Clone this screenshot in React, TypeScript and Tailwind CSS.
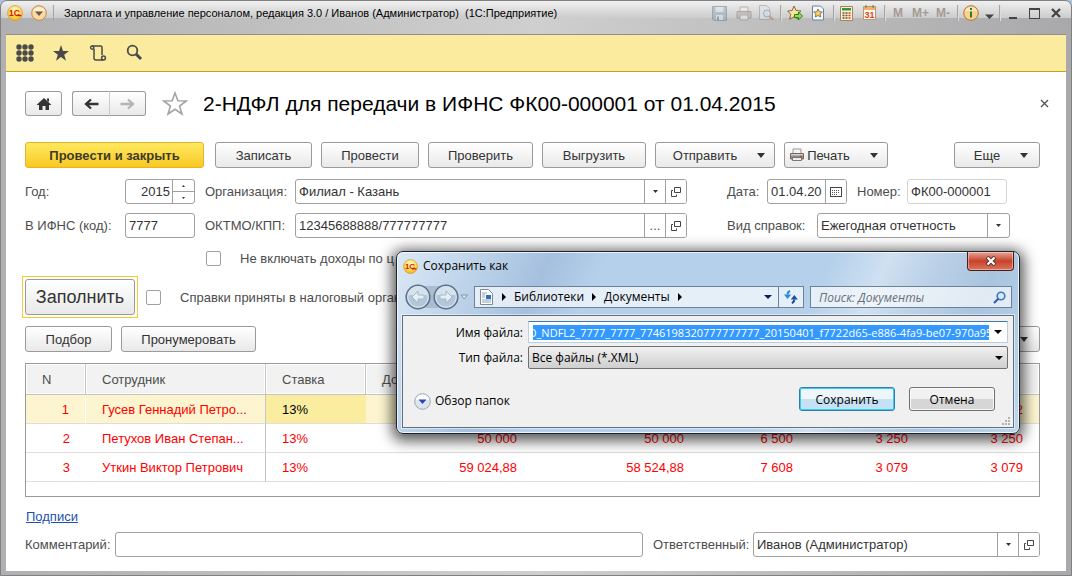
import React from "react";

const BTN =
  "flex items-center justify-center rounded-[3px] border border-[#9a9a9a] bg-linear-to-b from-white to-[#e9e9e9] text-[#333] whitespace-nowrap";
const FIELD = "flex h-[25px] items-stretch overflow-hidden rounded-[3px] border border-[#a0a0a0] bg-white";
const CELL = "flex w-[21px] shrink-0 items-center justify-center border-l border-[#a0a0a0] bg-white";
const INPUT = "min-w-0 flex-1 bg-transparent px-[3px] text-[#333] outline-none";

function Logo({ size }: { size: number }) {
  return (
    <svg width={size} height={size} viewBox="0 0 16 16" aria-hidden="true">
      <defs>
        <radialGradient id="logoFill" cx="50%" cy="30%" r="75%">
          <stop offset="0" stopColor="#fffbd0" />
          <stop offset="0.6" stopColor="#fbd94c" />
          <stop offset="1" stopColor="#f3a81c" />
        </radialGradient>
      </defs>
      <circle cx="8" cy="8" r="7.4" fill="url(#logoFill)" stroke="#d99a2c" strokeWidth="0.8" />
      <text x="2" y="11" fontFamily="Liberation Sans, sans-serif" fontSize="8.5" fontWeight="700" fill="#d9160c">
        1С
      </text>
      <path d="M9.5 10.5h4.8" stroke="#d9160c" strokeWidth="1.4" />
    </svg>
  );
}

function Caret({ small }: { small?: boolean }) {
  return small ? (
    <svg width="5" height="3" viewBox="0 0 5 3" aria-hidden="true">
      <path d="M0 0h5L2.5 3z" fill="#333" />
    </svg>
  ) : (
    <svg width="8" height="5" viewBox="0 0 8 5" aria-hidden="true">
      <path d="M0 0h8L4 5z" fill="#333" />
    </svg>
  );
}

function OpenIcon() {
  return (
    <svg width="10" height="10" viewBox="0 0 10 10" fill="none" stroke="#444" aria-hidden="true">
      <path d="M3.500 .5h6v5h-6z" />
      <path d="M2 3.500H.5v6h5V7.500" />
    </svg>
  );
}

function Sep() {
  return <span className="h-4 w-px bg-[#a3a3a3] shadow-[1px_0_0_#dedede]" />;
}

function TitleBar() {
  return (
    <header className="flex h-[33px] items-start pt-[3px] pr-[4px]">
      <div className="flex h-[18px] items-center pl-[1px]">
        <Logo size={16} />
        <button aria-label="Главное меню" className="ml-2">
          <svg width="16" height="16" viewBox="0 0 16 16" aria-hidden="true">
            <circle cx="8" cy="8" r="7.300" fill="#fbd9a0" stroke="#c08a4c" />
            <path d="M2 6a6.200 5 0 0 1 12 0z" fill="#fff" opacity=".6" />
            <path d="M4 6.500h8L8 11z" fill="#6e5a48" />
          </svg>
        </button>
        <span className="mr-[10px] ml-[6px] h-4 w-px bg-[#a3a3a3]" />
        <h1 className="text-[11px] leading-[18px] whitespace-pre text-black">
          {"Зарплата и управление персоналом, редакция 3.0 / Иванов (Администратор)  (1С:Предприятие)"}
        </h1>
      </div>
      <div className="ml-auto flex h-[18px] items-center">
        <button aria-label="Сохранить" className="opacity-50">
          <svg width="15" height="15" viewBox="0 0 15 15" aria-hidden="true">
            <path d="M.5.5h14v14H2L.5 13z" fill="#8fa5b8" stroke="#5d7a94" />
            <path d="M3.500 1h8v5h-8zM4 9h7v5H4z" fill="#dfe6ec" />
            <path d="M5 10.500h2V14H5z" fill="#5d7a94" />
          </svg>
        </button>
        <button aria-label="Печать" className="ml-[9px] opacity-50">
          <svg width="16" height="15" viewBox="0 0 16 15" aria-hidden="true">
            <path d="M4 1h8v5H4z" fill="#f2f2f2" stroke="#8a8a8a" />
            <path d="M1 5.500h14V12H1z" fill="#b5aaa2" stroke="#7d736c" />
            <path d="M4 9h8v5H4z" fill="#eee" stroke="#8a8a8a" />
            <path d="M11 7h2" stroke="#d06030" />
          </svg>
        </button>
        <button aria-label="Предварительный просмотр" className="ml-[6px] opacity-50">
          <svg width="16" height="16" viewBox="0 0 16 16" aria-hidden="true">
            <path d="M1.500.5h7l3 3v11h-10z" fill="#dfe3e6" stroke="#8494a2" />
            <circle cx="9" cy="8.500" r="3.500" fill="#cfe0ee" stroke="#6f8294" />
            <path d="M11.500 11l3.500 4" stroke="#b07a58" strokeWidth="2" />
          </svg>
        </button>
        <span className="w-[6px]" />
        <Sep />
        <button aria-label="Добавить в избранное" className="ml-[6px]">
          <svg width="16" height="16" viewBox="0 0 16 16" aria-hidden="true">
            <path d="M7 1l2 4.500 5 .5-3.700 3.300 1 5L7 11.800 2.700 14.300l1-5L.6 6l4.600-.5z" fill="#fbe3a0" stroke="#7d6b4a" />
            <path d="M7.500 9.500h4V7l4 4-4 4v-2.500h-4z" fill="#8be04c" stroke="#2f7d18" />
          </svg>
        </button>
        <button aria-label="Избранное" className="ml-[8px]">
          <svg width="14" height="16" viewBox="0 0 14 16" aria-hidden="true">
            <path d="M1.500 1h8l3 3v11h-11z" fill="#f4f9ff" stroke="#6484a4" />
            <path d="M7 4l1.300 2.700 3 .3-2.200 2 .6 3L7 10.500 4.300 12l.6-3-2.200-2 3-.3z" fill="#f9cf6a" stroke="#7b6030" strokeWidth=".8" />
          </svg>
        </button>
        <span className="w-[8px]" />
        <Sep />
        <button aria-label="Калькулятор" className="ml-[6px]">
          <svg width="13" height="15" viewBox="0 0 13 15" aria-hidden="true">
            <path d="M.5.5h12v14H.5z" fill="#fbf1d6" stroke="#a48355" />
            <path d="M2 2h9v2.500H2z" fill="#3d9142" />
            <path d="M2.500 7h2M5.500 7h2M2.500 9.500h2M5.500 9.500h2M2.500 12h2M5.500 12h2" stroke="#6b4c30" strokeWidth="1.300" />
            <path d="M8.500 7h2M8.500 9.500h2M8.500 12h2" stroke="#d53b1c" strokeWidth="1.300" />
          </svg>
        </button>
        <button aria-label="Календарь" className="ml-[10px]">
          <svg width="13" height="16" viewBox="0 0 13 16" aria-hidden="true">
            <path d="M.5 1.500h12v13H.5z" fill="#fffaf0" stroke="#b59b78" />
            <path d="M1 2h11v3H1z" fill="#efb370" />
            <path d="M3 0v3M10 0v3" stroke="#8c6a40" />
            <text x="1.500" y="13" fontFamily="Liberation Sans, sans-serif" fontSize="9" fontWeight="700" fill="#df3c1c">
              31
            </text>
          </svg>
        </button>
        <span className="w-[8px]" />
        <Sep />
        <button className="ml-[8px] text-[12px] leading-4 font-bold text-[#a49a94]">M</button>
        <button className="ml-[9px] text-[12px] leading-4 font-bold text-[#a49a94]">M+</button>
        <button className="ml-[7px] text-[12px] leading-4 font-bold text-[#a49a94]">M-</button>
        <span className="w-[7px]" />
        <Sep />
        <button aria-label="Справка" className="ml-[5px] flex items-center">
          <svg width="16" height="16" viewBox="0 0 16 16" aria-hidden="true">
            <circle cx="8" cy="8" r="7.300" fill="#fbd08a" stroke="#a87a40" />
            <path d="M2 6a6.200 5 0 0 1 12 0z" fill="#fff" opacity=".5" />
            <path d="M8 3v2M8 6.500v6" stroke="#2f7d28" strokeWidth="2" />
          </svg>
          <svg className="mt-[6px] ml-[6px]" width="9" height="5" viewBox="0 0 9 5" aria-hidden="true">
            <path d="M0 .5h9L4.500 5z" fill="#444" />
          </svg>
        </button>
        <span className="w-[5px]" />
        <Sep />
        <button aria-label="Свернуть" className="ml-[9px] flex h-4 w-[8px] items-end pb-[2px]">
          <span className="h-[2px] w-full bg-[#444]" />
        </button>
        <button aria-label="Развернуть" className="ml-[12px] h-[11px] w-[11px] border border-t-2 border-[#444]" />
        <button aria-label="Закрыть" className="mr-[1px] ml-[11px]">
          <svg width="10" height="10" viewBox="0 0 10 10" aria-hidden="true">
            <path d="M1 1l8 8M9 1L1 9" stroke="#444" strokeWidth="2.300" />
          </svg>
        </button>
      </div>
    </header>
  );
}

function YellowBar() {
  return (
    <nav className="flex h-[37px] items-center border-b border-[#bfa51a] bg-[#fbeb9e] pl-[10px]">
      <button aria-label="Разделы">
        <svg width="18" height="18" viewBox="0 0 18 18" fill="#4a4a4a" aria-hidden="true">
          {[3, 9, 15].map((y) => [3, 9, 15].map((x) => <circle key={`${x}-${y}`} cx={x} cy={y} r="2.700" />))}
        </svg>
      </button>
      <button aria-label="Избранное" className="ml-[18px]">
        <svg width="18" height="18" viewBox="0 0 18 18" fill="#4a4a4a" aria-hidden="true">
          <path d="M9 1l2 6h6l-4.800 3.700 1.800 6L9 13.100l-5 3.600 1.800-6L1 7h6z" />
        </svg>
      </button>
      <button aria-label="История" className="ml-[19px]">
        <svg width="18" height="18" viewBox="0 0 18 18" fill="none" stroke="#4a4a4a" strokeWidth="1.500" aria-hidden="true">
          <path d="M3 2h8.500q1.500 0 1.500 1.500V11M5 4.500V14q0 2 2 2H14" />
          <circle cx="3.200" cy="3.600" r="1.600" />
          <circle cx="14.500" cy="14" r="1.900" />
        </svg>
      </button>
      <button aria-label="Поиск" className="ml-[18px]">
        <svg width="18" height="18" viewBox="0 0 18 18" fill="none" stroke="#4a4a4a" aria-hidden="true">
          <circle cx="7.500" cy="6.500" r="4.800" strokeWidth="1.800" />
          <path d="M11 10l5 5" strokeWidth="3" />
        </svg>
      </button>
    </nav>
  );
}

function Heading() {
  return (
    <div className="flex h-[25px] items-center">
      <button aria-label="Домой" className={`${BTN} h-[25px] w-[37px]`}>
        <svg width="16" height="14" viewBox="0 0 16 14" aria-hidden="true">
          <path d="M8 1l7.500 7H13v5H9.500V9h-3v4H3V8H.5z" fill="#333" />
          <path d="M11 1.500h2V5l-2-1.500z" fill="#333" />
        </svg>
      </button>
      <div className="ml-[10px] flex">
        <button aria-label="Назад" className={`${BTN} h-[25px] w-[38px] rounded-r-none border-r-[#ccc]`}>
          <svg width="15" height="12" viewBox="0 0 15 12" aria-hidden="true">
            <path d="M14.500 6H3M7 1.500L2 6l5 4.500" fill="none" stroke="#333" strokeWidth="2.300" />
          </svg>
        </button>
        <button aria-label="Вперед" className={`${BTN} h-[25px] w-[36px] rounded-l-none border-l-0`}>
          <svg width="15" height="12" viewBox="0 0 15 12" aria-hidden="true">
            <path d="M.5 6H12M8 1.500L13 6l-5 4.500" fill="none" stroke="#b4b4b4" strokeWidth="2.300" />
          </svg>
        </button>
      </div>
      <button aria-label="В избранное" className="ml-[16px]">
        <svg width="26" height="25" viewBox="0 0 26 25" aria-hidden="true">
          <path
            d="M13 2l2.900 7.800 8.300.2-6.600 5 2.400 8-7-4.700L6 23l2.400-8-6.600-5 8.300-.2z"
            fill="#fff"
            stroke="#a4a4a4"
            strokeWidth="1.600"
          />
        </svg>
      </button>
      <h2 className="ml-[15px] text-[21px] leading-[25px] whitespace-nowrap text-black">
        2-НДФЛ для передачи в ИФНС ФК00-000001 от 01.04.2015
      </h2>
      <button aria-label="Закрыть документ" className="-mr-[9px] ml-auto">
        <svg width="9" height="9" viewBox="0 0 9 9" aria-hidden="true">
          <path d="M1 1l7 7M8 1L1 8" stroke="#555" strokeWidth="1.400" />
        </svg>
      </button>
    </div>
  );
}

function Commands() {
  return (
    <div className="mt-[26px] flex h-[26px]">
      <button className="w-[179px] rounded-[3px] border border-[#e8b32c] bg-linear-to-b from-[#fee95e] to-[#f8c91c] font-bold text-[#3f3a28]">
        Провести и закрыть
      </button>
      <button className={`${BTN} ml-[11px] w-[97px]`}>Записать</button>
      <button className={`${BTN} ml-[9px] w-[98px]`}>Провести</button>
      <button className={`${BTN} ml-[9px] w-[105px]`}>Проверить</button>
      <button className={`${BTN} ml-[9px] w-[104px]`}>Выгрузить</button>
      <button className={`${BTN} ml-[9px] w-[120px] gap-[20px] pl-[8px]`}>
        Отправить <Caret />
      </button>
      <button className={`${BTN} ml-[9px] w-[104px] pr-[4px]`}>
        <svg width="14" height="14" viewBox="0 0 14 14" aria-hidden="true">
          <path d="M3 1h8v5H3z" fill="#f4f4f4" stroke="#999" />
          <path d="M.5 5.500h13v5.500H.5z" fill="#8f8a86" stroke="#6e6965" />
          <path d="M1 6h12v1.500H1z" fill="#d4d0cc" />
          <path d="M2.500 9.500h9v3h-9z" fill="#f0ede9" stroke="#777" />
          <path d="M10 8.500h2" stroke="#e03a1c" strokeWidth="1.400" />
        </svg>
        <span className="ml-[3px]">Печать</span>
        <span className="ml-[20px]">
          <Caret />
        </span>
      </button>
      <button className={`${BTN} ml-auto w-[86px] gap-[20px] pl-[8px]`}>
        Еще <Caret />
      </button>
    </div>
  );
}

function MainFields() {
  return (
    <div className="mt-[11px] flex pr-[30px]">
      <div className="grid flex-1 grid-cols-[100px_70px_80px_minmax(0,1fr)] items-center gap-x-0 gap-y-[9px]">
        <label htmlFor="year">Год:</label>
        <div className={FIELD}>
          <input id="year" defaultValue="2015" className={`${INPUT} pr-[2px] text-right`} />
          <div className="flex w-[22px] flex-col border-l border-[#a0a0a0]">
            <button aria-label="Больше" className="flex flex-1 items-center justify-center border-b border-[#a0a0a0]">
              <svg width="3" height="2" viewBox="0 0 3 2" aria-hidden="true">
                <path d="M0 2h3L1.500 0z" fill="#333" />
              </svg>
            </button>
            <button aria-label="Меньше" className="flex flex-1 items-center justify-center">
              <svg width="3" height="2" viewBox="0 0 3 2" aria-hidden="true">
                <path d="M0 0h3L1.500 2z" fill="#333" />
              </svg>
            </button>
          </div>
        </div>
        <label htmlFor="org" className="pl-[10px] whitespace-nowrap">
          Организация:
        </label>
        <div className={`${FIELD} ml-5`}>
          <input id="org" defaultValue="Филиал - Казань" className={INPUT} />
          <button aria-label="Выбрать организацию" className={CELL}>
            <Caret small />
          </button>
          <button aria-label="Открыть организацию" className={CELL}>
            <OpenIcon />
          </button>
        </div>
        <label htmlFor="ifns" className="whitespace-nowrap">
          В ИФНС (код):
        </label>
        <div className={FIELD}>
          <input id="ifns" defaultValue="7777" className={INPUT} />
        </div>
        <label htmlFor="oktmo" className="pl-[10px] whitespace-nowrap">
          ОКТМО/КПП:
        </label>
        <div className={`${FIELD} ml-5`}>
          <input id="oktmo" defaultValue="12345688888/777777777" className={INPUT} />
          <button aria-label="Подобрать код" className={CELL}>
            ...
          </button>
          <button aria-label="Открыть код" className={CELL}>
            <OpenIcon />
          </button>
        </div>
      </div>
      <div className="ml-[40px] flex w-[283px] flex-col gap-[9px]">
        <div className="flex items-center">
          <label htmlFor="date" className="w-[40px]">
            Дата:
          </label>
          <div className={`${FIELD} w-[80px]`}>
            <input id="date" defaultValue="01.04.20" className={INPUT} />
            <button aria-label="Календарь" className={CELL}>
              <svg width="12" height="10" viewBox="0 0 12 10" shapeRendering="crispEdges" aria-hidden="true">
                <path d="M.5.5h11v9H.5z" fill="none" stroke="#444" />
                <path d="M2 3.500h8M2 5.500h8M2 7.500h6" stroke="#555" strokeDasharray="1 1" />
              </svg>
            </button>
          </div>
          <label htmlFor="number" className="ml-[10px] w-[50px]">
            Номер:
          </label>
          <div className={`${FIELD} w-[100px] border-[#d4d4d4]`}>
            <input id="number" defaultValue="ФК00-000001" className={INPUT} />
          </div>
        </div>
        <div className="flex items-center">
          <label htmlFor="kind" className="w-[90px] whitespace-nowrap">
            Вид справок:
          </label>
          <div className={`${FIELD} relative flex-1`}>
            <select id="kind" className="min-w-0 flex-1 appearance-none bg-transparent px-[3px] text-[#333]">
              <option>Ежегодная отчетность</option>
            </select>
            <span className="pointer-events-none absolute inset-y-0 right-0 flex w-[22px] items-center justify-center border-l border-[#a0a0a0]">
              <Caret small />
            </span>
          </div>
        </div>
      </div>
    </div>
  );
}

const CHECK = "h-[15px] w-[15px] shrink-0 appearance-none rounded-[2px] border border-[#a0a0a0] bg-white";

const ROWS = [
  ["1", "Гусев Геннадий Петро...", "13%", "", "", "", "", "2"],
  ["2", "Петухов Иван Степан...", "13%", "50 000", "50 000", "6 500", "3 250", "3 250"],
  ["3", "Уткин Виктор Петрович", "13%", "59 024,88", "58 524,88", "7 608", "3 079", "3 079"],
];

function cellClass(row: number, col: number) {
  const parts = ["overflow-hidden whitespace-nowrap border-b border-[#dedede]"];
  if (col >= 1 && col <= 2) parts.push("pl-[16px] text-left");
  else parts.push("pr-[16px] text-right");
  if (col === 1) parts.push("border-r border-r-[#c4c4c4]");
  if (row === 0) {
    if (col === 2) parts.push("bg-[#fbeda0] text-black");
    else parts.push("bg-[#fdf5cf]");
    if (col === 0) parts.push("border-r border-r-white");
  }
  return parts.join(" ");
}

function Employees() {
  return (
    <div className="mt-[11px] h-[134px] border border-[#9a9a9a] bg-white">
      <table className="w-full table-fixed border-separate border-spacing-0">
        <colgroup>
          <col className="w-[60px]" />
          <col className="w-[180px]" />
          <col className="w-[100px]" />
          <col />
          <col />
          <col className="w-[109px]" />
          <col className="w-[115px]" />
          <col className="w-[115px]" />
        </colgroup>
        <thead>
          <tr className="h-[31px]">
            {["N", "Сотрудник", "Ставка", "До", "", "", "", ""].map((name, i) => (
              <th
                key={i}
                className="border-r border-b border-[#c4c4c4] bg-[#f2f2f2] pl-[16px] text-left font-normal text-[#4d4d4d] shadow-[inset_0_0_0_1px_#fff] last:border-r-0"
              >
                {name}
              </th>
            ))}
          </tr>
        </thead>
        <tbody className="text-[#ff0000]">
          {ROWS.map((row, r) => (
            <tr key={r} className="h-[29px]">
              {row.map((value, c) => (
                <td key={c} className={cellClass(r, c)}>
                  {value}
                </td>
              ))}
            </tr>
          ))}
        </tbody>
      </table>
    </div>
  );
}

const GLASS = "border border-[#6c8296] bg-white/65";

function SaveDialog() {
  return (
    <section
      role="dialog"
      aria-label="Сохранить как"
      className="absolute top-[250px] right-[51px] left-[395px] rounded-[7px] border border-[#1b242e] bg-[linear-gradient(115deg,#dbe9f6_0%,#bdd3ea_12%,#a5c0de_22%,#b5d0ea_30%,#b5d0ea_62%,#cfe0f1_70%,#b9cfe6_78%,#a9c4df_86%,#bcd6ee_100%)] px-[5px] pb-[5px] font-['Open_Sans','Noto_Sans',sans-serif] text-[12px] text-black shadow-[inset_0_0_0_1px_rgba(255,255,255,0.75),0_3px_14px_4px_rgba(0,0,0,0.65)]"
    >
      <div className="flex h-[32px] items-start">
        <div className="flex items-center pt-[6px] pl-[1px]">
          <Logo size={15} />
          <h3 className="ml-[5px] leading-4">Сохранить как</h3>
        </div>
        <button
          aria-label="Закрыть окно"
          className="ml-auto flex h-[19px] w-[47px] items-center justify-center rounded-b-[4px] border border-t-0 border-[#4b1a1a] bg-linear-to-b from-[#e5a397] via-[#c8402a] to-[#d8745a] shadow-[inset_0_0_0_1px_rgba(255,255,255,0.4)]"
        >
          <svg width="12" height="10" viewBox="0 0 12 10" aria-hidden="true">
            <path d="M2 1l8 8M10 1L2 9" stroke="#5a3030" strokeWidth="4" />
            <path d="M2.500 1.500l7 7M9.500 1.500l-7 7" stroke="#fff" strokeWidth="2.200" />
          </svg>
        </button>
      </div>
      <div className="flex h-[31px] items-start">
        <svg width="66" height="28" viewBox="0 0 66 28" aria-hidden="true">
          <path d="M14 2h28v22H14z" fill="#8fa5bb" opacity=".55" />
          {[16, 44].map((x) => (
            <g key={x}>
              <circle cx={x} cy="13" r="11.800" fill="#b4c7da" stroke="#5b7085" strokeWidth="1.500" />
              <circle cx={x} cy="13" r="10.300" fill="none" stroke="#dfe9f3" />
              <path d={`M${x - 10} 11a10 9 0 0 1 20 0z`} fill="#d5e1ed" />
            </g>
          ))}
          <path d="M16 7l-6 6 6 6v-4h6v-4h-6z" fill="#e6eef6" stroke="#a4b8cc" />
          <path d="M44 7l6 6-6 6v-4h-6v-4h6z" fill="#e6eef6" stroke="#a4b8cc" />
          <path d="M59 11h6.500l-3.250 4z" fill="#dce8f4" stroke="#7d94ab" />
        </svg>
        <div className={`${GLASS} mt-[2px] ml-[6px] flex h-[22px] min-w-0 flex-1 items-center pl-[5px]`}>
          <svg width="13" height="16" viewBox="0 0 13 16" aria-hidden="true">
            <path d="M.5.5h8l4 4v11H.5z" fill="#fff" stroke="#7d8a96" />
            <path d="M2 4h5M2 6h3M2 8h3M2 11h9M2 13h9" stroke="#8fa0b0" />
            <path d="M6 6h5v4H6z" fill="#2f6fc0" />
          </svg>
          <span className="ml-[9px]">
            <Chevron />
          </span>
          <button className="ml-[8px] leading-4">Библиотеки</button>
          <span className="ml-[8px]">
            <Chevron />
          </span>
          <button className="ml-[8px] leading-4">Документы</button>
          <span className="ml-[8px]">
            <Chevron />
          </span>
          <button aria-label="Предыдущие расположения" className="mr-[6px] ml-auto">
            <svg width="8" height="4" viewBox="0 0 8 4" aria-hidden="true">
              <path d="M0 0h8L4 4z" fill="#0b1a5c" />
            </svg>
          </button>
          <button aria-label="Обновить" className="flex h-full w-[25px] items-center justify-center border-l border-[#6c8296]">
            <svg width="14" height="14" viewBox="0 0 14 14" fill="none" aria-hidden="true">
              <path d="M3.500 4.500Q3.500 2 6 1" stroke="#2c8bd0" strokeWidth="2" />
              <path d="M0 4.500h7.200L3.600 9z" fill="#2c8bd0" />
              <path d="M10.300 9.500q0 2.500-2.500 3.500" stroke="#1c4f9c" strokeWidth="2" />
              <path d="M6.800 9.500h7L10.300 5z" fill="#1c4f9c" />
            </svg>
          </button>
        </div>
        <div className={`${GLASS} mt-[2px] mr-[2px] ml-[6px] flex h-[22px] w-[202px] items-center pr-[5px] pl-[8px]`}>
          <input
            aria-label="Поиск"
            placeholder="Поиск: Документы"
            className="min-w-0 flex-1 bg-transparent italic outline-none placeholder:text-[#66707a]"
          />
          <svg width="13" height="13" viewBox="0 0 13 13" fill="none" aria-hidden="true">
            <circle cx="8" cy="5" r="3.800" fill="#d6e9fa" stroke="#3d78b8" strokeWidth="1.600" />
            <path d="M5.300 7.700L1 12" stroke="#2f62a8" strokeWidth="2.200" />
          </svg>
        </div>
      </div>
      <div className="relative h-[113px] border border-[#5f7080] bg-[#f0f0f0] px-[5px] pt-[5px] shadow-[0_0_0_1px_rgba(255,255,255,0.5)]">
        <div className="grid grid-cols-[115px_minmax(0,1fr)] items-center gap-x-[5px] gap-y-[3px]">
          <label htmlFor="filename" className="text-right">
            Имя файла:
          </label>
          <div className="flex h-[22px] items-center border border-[#b5cfe7] border-t-[#3d7bad] bg-white pl-[4px]">
            <input
              id="filename"
              defaultValue="O_NDFL2_7777_7777_7746198320777777777_20150401_f7722d65-e886-4fa9-be07-970a95"
              className="h-[15px] min-w-0 flex-1 bg-[#3399ff] indent-[-5px] text-[11px] text-white outline-none"
            />
            <button aria-label="Показать имена" className="flex w-[18px] justify-center">
              <svg width="8" height="4" viewBox="0 0 8 4" aria-hidden="true">
                <path d="M0 0h8L4 4z" fill="#000" />
              </svg>
            </button>
          </div>
          <label htmlFor="filetype" className="text-right">
            Тип файла:
          </label>
          <div className="relative flex h-[23px]">
            <select
              id="filetype"
              className="w-full appearance-none rounded-[2px] border border-[#707070] bg-linear-to-b from-[#f1f1f1] to-[#cfcfcf] px-[3px] leading-4"
            >
              <option>Все файлы (*.XML)</option>
            </select>
            <span className="pointer-events-none absolute inset-y-0 right-[5px] flex items-center">
              <svg width="8" height="4" viewBox="0 0 8 4" aria-hidden="true">
                <path d="M0 0h8L4 4z" fill="#000" />
              </svg>
            </span>
          </div>
        </div>
        <div className="mt-[18px] flex items-center pr-[13px] pl-[6px]">
          <button className="flex items-center pt-[4px]">
            <svg width="17" height="17" viewBox="0 0 17 17" aria-hidden="true">
              <circle cx="8.500" cy="8.500" r="7.800" fill="#dfe5ee" stroke="#9aa8ba" />
              <path d="M2 7a6.500 5.500 0 0 1 13 0z" fill="#fff" />
              <path d="M4.500 6.500h8L8.500 11z" fill="#2c46b4" />
            </svg>
            <span className="ml-[4px] leading-4">Обзор папок</span>
          </button>
          <button className="ml-auto h-[24px] w-[96px] rounded-[3px] border border-[#2c7fae] bg-linear-to-b from-[#eef6fb] from-50% to-[#c4e2f3] to-50% shadow-[inset_0_0_0_1px_#38cdf5]">
            Сохранить
          </button>
          <button className="ml-[14px] h-[24px] w-[86px] rounded-[3px] border border-[#707070] bg-linear-to-b from-[#f1f1f1] from-50% to-[#d6d6d6] to-50% shadow-[inset_0_0_0_1px_rgba(255,255,255,0.8)]">
            Отмена
          </button>
        </div>
        <svg className="absolute right-[2px] bottom-[1px]" width="9" height="9" viewBox="0 0 9 9" fill="#b4b4b4" aria-hidden="true">
          <path d="M6 0h2v2H6zM3 3h2v2H3zM6 3h2v2H6zM0 6h2v2H0zM3 6h2v2H3zM6 6h2v2H6z" />
        </svg>
      </div>
    </section>
  );
}

function Chevron() {
  return (
    <svg width="4" height="8" viewBox="0 0 4 8" aria-hidden="true">
      <path d="M0 0l4 4-4 4z" fill="#000" />
    </svg>
  );
}

export default function App() {
  return (
    <div className="min-h-screen bg-[#a9c3e6] font-['Liberation_Sans',Arial,sans-serif] text-[13px] leading-[15px] text-[#4d4d4d]">
      <div className="relative flex min-h-screen flex-col rounded-t-[7px] border border-[#808080] bg-[linear-gradient(to_bottom,#f0f0f0_0,#cccccc_17px,transparent_17px),linear-gradient(to_right,#b0b0b2,#cfcfcf_50%,#a9a9ab)] bg-no-repeat bg-[length:100%_17px,100%_100%] px-[5px] pb-[4px]">
        <TitleBar />
        <main className="flex flex-1 flex-col border-t border-[#8f8f92] bg-white">
          <YellowBar />
          <div className="pt-[19px] pr-[26px] pb-[14px] pl-[19px]">
            <Heading />
            <Commands />
            <MainFields />
            <div className="mt-[13px] flex items-center pl-[181px]">
              <input id="skip" type="checkbox" className={CHECK} />
              <label htmlFor="skip" className="ml-[19px] whitespace-nowrap">
                Не включать доходы по ц
              </label>
            </div>
            <div className="mt-[10px] -ml-[3px] flex items-center">
              <div className="border border-[#f5cb2c] p-[2px]">
                <button className={`${BTN} h-[36px] w-[110px] text-[18px]`}>Заполнить</button>
              </div>
              <input id="accepted" type="checkbox" className={`${CHECK} ml-[8px]`} />
              <label htmlFor="accepted" className="ml-[19px] whitespace-nowrap">
                Справки приняты в налоговый орган
              </label>
            </div>
            <div className="mt-[8px] flex h-[26px]">
              <button className={`${BTN} w-[87px]`}>Подбор</button>
              <button className={`${BTN} ml-[9px] w-[135px]`}>Пронумеровать</button>
              <button aria-label="Еще" className={`${BTN} ml-auto w-[86px] pl-[54px]`}>
                <Caret />
              </button>
            </div>
            <Employees />
            <a href="#signatures" className="mt-[12px] ml-[1px] block w-fit text-[#1a4fb0] underline">
              Подписи
            </a>
            <div className="mt-[8px] flex items-center">
              <label htmlFor="comment" className="w-[90px]">
                Комментарий:
              </label>
              <div className={`${FIELD} flex-1`}>
                <input id="comment" className={INPUT} />
              </div>
              <label htmlFor="owner" className="ml-[10px] w-[100px]">
                Ответственный:
              </label>
              <div className={`${FIELD} w-[287px]`}>
                <input id="owner" defaultValue="Иванов (Администратор)" className={INPUT} />
                <button aria-label="Выбрать ответственного" className={CELL}>
                  <Caret small />
                </button>
                <button aria-label="Открыть ответственного" className={CELL}>
                  <OpenIcon />
                </button>
              </div>
            </div>
          </div>
        </main>
        <SaveDialog />
      </div>
    </div>
  );
}
